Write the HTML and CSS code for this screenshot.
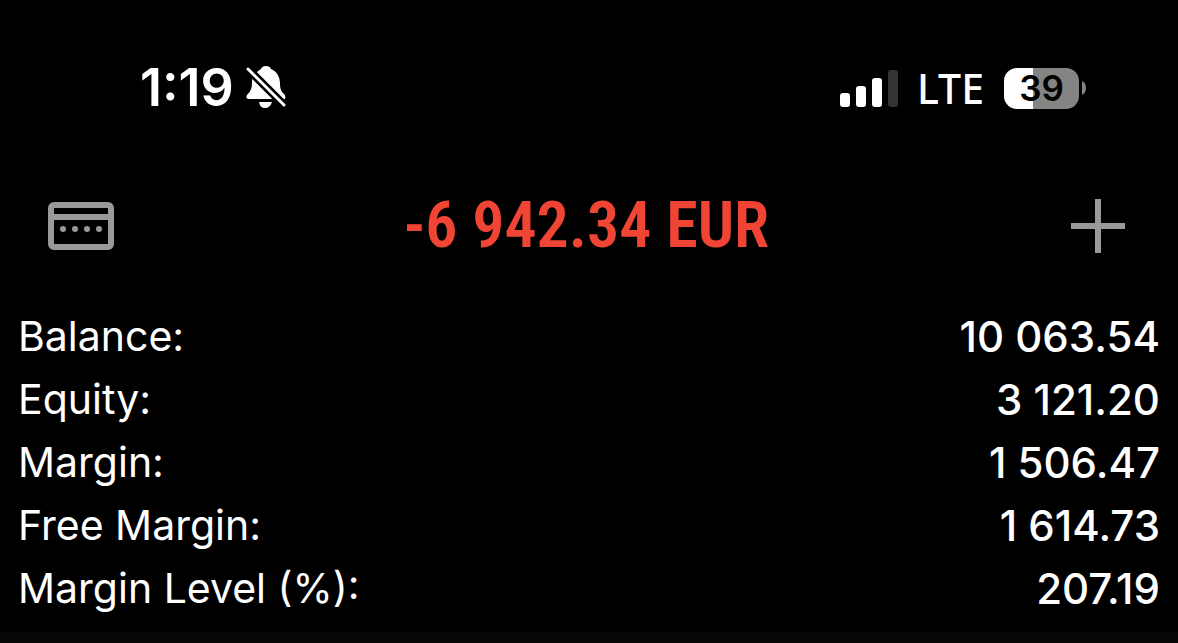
FILE: index.html
```html
<!DOCTYPE html>
<html lang="en">
<head>
<meta charset="utf-8">
<meta name="viewport" content="width=device-width, initial-scale=1">
<title>Trade</title>
<link rel="stylesheet" href="styles.css">
</head>
<body>
<div class="status-bar">
  <div class="status-group">
    <time class="clock">1:19</time>
    <svg class="bell" viewBox="0 0 42 46" role="img" aria-label="Silent mode">
      <path fill="#fff" d="M11 8Q14 5 16 4Q17 1 21 1Q25 1 26 4C33 7 35 13 35 19C35 25 37 27 39 29Q41 31 40 34H4Q0 34 2 30C6 26 7 23 7 17C7 13 8 10 11 8Z"/>
      <path fill="#fff" d="M14 37H27Q25 43 20 43Q15 43 14 37Z"/>
      <path stroke="#000" stroke-width="8" d="M-2 -1L43 44"/>
      <path stroke="#fff" stroke-width="3" stroke-linecap="round" d="M3 4L39 40"/>
    </svg>
  </div>
  <div class="status-group">
    <svg class="signal" viewBox="0 0 58 37" role="img" aria-label="Signal: 3 of 4 bars">
      <g fill="#fff"><rect y="23" width="10" height="14" rx="3"/><rect x="16" y="16" width="10" height="21" rx="3"/><rect x="32" y="8" width="10" height="29" rx="3"/></g>
      <rect x="48" width="10" height="37" rx="3" fill="#333"/>
    </svg>
    <span class="network">LTE</span>
    <div class="battery"><span class="battery-level">39</span><svg class="battery-cap" viewBox="0 0 4 14" aria-hidden="true"><path fill="#848484" d="M0 0Q4 2 4 7T0 14Z"/></svg></div>
  </div>
</div>
<header class="toolbar">
  <button class="icon-button" type="button" aria-label="Accounts">
    <svg class="card-icon" viewBox="0 0 66 48" aria-hidden="true">
      <rect x="3" y="3" width="60" height="42" rx="3" fill="none" stroke="#999" stroke-width="6"/>
      <path d="M3 15H63" stroke="#999" stroke-width="6"/>
      <g fill="#999"><circle cx="15" cy="27" r="3"/><circle cx="27" cy="27" r="3"/><circle cx="39" cy="27" r="3"/><circle cx="51" cy="27" r="3"/></g>
    </svg>
  </button>
  <h1 class="profit">-6 942.34 EUR</h1>
  <button class="icon-button add" type="button" aria-label="New order">
    <svg class="plus-icon" viewBox="0 0 54 54" aria-hidden="true"><path d="M27 0V54M0 27H54" stroke="#999" stroke-width="6"/></svg>
  </button>
</header>
<main>
  <dl class="summary">
    <div class="row"><dt>Balance:</dt><dd>10 063.54</dd></div>
    <div class="row"><dt>Equity:</dt><dd>3 121.20</dd></div>
    <div class="row"><dt>Margin:</dt><dd>1 506.47</dd></div>
    <div class="row"><dt>Free Margin:</dt><dd>1 614.73</dd></div>
    <div class="row"><dt>Margin Level (%):</dt><dd>207.19</dd></div>
  </dl>
</main>
</body>
</html>
```
FILE: styles.css
```css
* { box-sizing: border-box; }
body {
  margin: 0;
  min-height: 100vh;
  display: flex;
  flex-direction: column;
  background: #070707;
  color: #fff;
  font-family: Inter, "Liberation Sans", sans-serif;
}
.status-bar {
  display: flex;
  justify-content: space-between;
  align-items: center;
  padding: 56px 92px 52px 140px;
  background: #000;
}
.status-group { display: flex; align-items: center; }
.clock { font-size: 52px; line-height: 64px; font-weight: 600; }
.bell { width: 42px; height: 46px; margin-left: 11px; }
.signal { width: 58px; height: 37px; }
.network {
  margin: 0 20px 0 19px;
  font-family: "Noto Sans", sans-serif;
  font-size: 41px;
  line-height: 64px;
  font-weight: 500;
}
.battery {
  display: flex;
  align-items: center;
  gap: 3px;
}
.battery-level {
  width: 75px;
  border-radius: 13px;
  background: linear-gradient(90deg, #fff 39%, #848484 39%);
  color: #000;
  font-size: 35px;
  line-height: 41px;
  font-weight: 600;
  text-align: center;
}
.battery-cap { width: 4px; height: 14px; }
.toolbar {
  display: grid;
  grid-template-columns: 1fr auto 1fr;
  align-items: center;
  padding: 12px 53px 12px 48px;
  background: #000;
}
.icon-button {
  justify-self: start;
  display: flex;
  padding: 0;
  border: 0;
  background: none;
}
.add { justify-self: end; }
.card-icon { width: 66px; height: 48px; }
.plus-icon { width: 54px; height: 54px; }
.profit {
  margin: 0;
  color: #f04535;
  font: 600 64px/84px "Roboto Condensed", "Liberation Sans Narrow", sans-serif;
}
main { background: #000; padding: 25px 18px 12px; }
.summary { margin: 0; }
.row {
  display: flex;
  justify-content: space-between;
  font-size: 41px;
  line-height: 63px;
}
dd { margin: 0; font-size: 42px; font-weight: 500; }
```
